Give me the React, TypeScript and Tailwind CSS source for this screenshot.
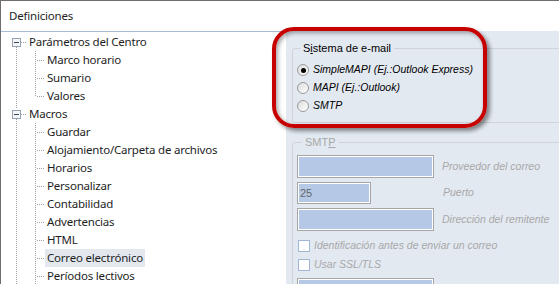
const tree: { label: string; root?: boolean; first?: boolean; last?: boolean; selected?: boolean }[] = [
  { label: "Parámetros del Centro", root: true, first: true },
  { label: "Marco horario" },
  { label: "Sumario" },
  { label: "Valores", last: true },
  { label: "Macros", root: true },
  { label: "Guardar" },
  { label: "Alojamiento/Carpeta de archivos" },
  { label: "Horarios" },
  { label: "Personalizar" },
  { label: "Contabilidad" },
  { label: "Advertencias" },
  { label: "HTML" },
  { label: "Correo electrónico", selected: true },
  { label: "Períodos lectivos" },
];

const dot = { stroke: "#a3a3a3", strokeDasharray: "1 1", shapeRendering: "crispEdges" as const };

function RootLines({ first }: { first?: boolean }) {
  return (
    <svg width="25" height="18" className="shrink-0">
      {!first && <line x1="15.5" y1="0" x2="15.5" y2="4" {...dot} />}
      <line x1="15.5" y1="14" x2="15.5" y2="18" {...dot} />
      <line x1="20" y1="9.5" x2="25" y2="9.5" {...dot} />
      <rect x="11.5" y="5.5" width="8" height="8" fill="#f4f6f8" stroke="#97a2b2" shapeRendering="crispEdges" />
      <line x1="13" y1="9.5" x2="18" y2="9.5" stroke="#3a4a66" shapeRendering="crispEdges" />
    </svg>
  );
}

function ChildLines({ last }: { last?: boolean }) {
  return (
    <svg width="44" height="18" className="shrink-0">
      <line x1="15.5" y1="0" x2="15.5" y2="18" {...dot} />
      <line x1="34.5" y1="0" x2="34.5" y2={last ? 10 : 18} {...dot} />
      <line x1="36" y1="9.5" x2="44" y2="9.5" {...dot} />
    </svg>
  );
}

function Radio({ checked, label }: { checked?: boolean; label: string }) {
  return (
    <div className="flex h-[18px] items-center">
      <div className="ml-[2px] flex h-[12px] w-[12px] items-center justify-center rounded-full border border-[#9a9a9a] bg-gradient-to-br from-[#dcdcdc] to-white">
        {checked && <div className="h-[5px] w-[5px] rounded-full bg-black" />}
      </div>
      <span className="ml-[4px] italic text-black">{label}</span>
    </div>
  );
}

function Field({ w, value }: { w: string; value?: string }) {
  return (
    <div className={`${w} h-full border border-[#a6a6a6] bg-[#b5c9e7] pl-[2px] text-[11px] text-[#666] shadow-[inset_0_0_0_1px_#fff] flex items-center`}>
      {value}
    </div>
  );
}

function Check({ label }: { label: string }) {
  return (
    <div className="flex h-[18px] items-center">
      <div className="ml-[1px] h-[12px] w-[12px] border border-[#a2b6d6] bg-white" />
      <span className="ml-[4px] italic">{label}</span>
    </div>
  );
}

export default function App() {
  return (
    <div className="relative h-[284px] w-[559px] overflow-hidden border-l border-t border-[#6e6e6e] bg-white font-['Noto_Sans',sans-serif] text-[11.5px] tracking-[-0.2px] text-[#1e1e1e]">
      {/* Title */}
      <div className="flex h-[30px] items-center pl-[8px]">Definiciones</div>

      <div className="flex">
        {/* Tree */}
        <div className="h-[260px] w-[285px] shrink-0 border-t border-[#a9bcd6] pt-[1px]">
          {tree.map((n) => (
            <div key={n.label} className="flex h-[18px] items-center leading-none">
              {n.root ? <RootLines first={n.first} /> : <ChildLines last={n.last} />}
              <span className={`flex h-[18px] items-center px-[2px] ${n.root ? "ml-[1px]" : ""} ${n.selected ? "bg-[#e3e8ef]" : ""}`}>
                {n.label}
              </span>
            </div>
          ))}
        </div>

        {/* Email settings */}
        <div className="h-[260px] flex-1 bg-[#e3e9f1] pl-[6px] pt-[10px] font-['Liberation_Sans',sans-serif] text-[10.5px] tracking-normal">
          <fieldset className="h-[82px] w-[300px] rounded-[3px] border border-[#d0d3d8] pl-[2px] pt-[6px]">
            <legend className="ml-[5px] px-[3px] text-[11px] leading-[14px] text-black">
              S<span className="underline">i</span>stema de e-mail
            </legend>
            <Radio checked label="SimpleMAPI (Ej.:Outlook Express)" />
            <Radio label="MAPI (Ej.:Outlook)" />
            <Radio label="SMTP" />
          </fieldset>

          <fieldset className="mt-[12px] h-[200px] w-[300px] rounded-[3px] border border-[#d0d3d8] pl-[4px] pt-[6px] text-[#a8a8a8]">
            <legend className="ml-[5px] px-[3px] text-[11px] leading-[14px]">
              SMT<span className="underline">P</span>
            </legend>
            <div className="grid grid-cols-[137px_auto] items-center gap-x-[8px]">
              <div className="h-[23px]"><Field w="w-[137px]" /></div>
              <span className="italic">Proveedor del correo</span>
              <div className="mt-[4px] h-[22px]"><Field w="w-[74px]" value="25" /></div>
              <span className="mt-[4px] pl-[1px] italic">Puerto</span>
              <div className="mt-[4px] h-[23px]"><Field w="w-[137px]" /></div>
              <span className="mt-[4px] italic">Dirección del remitente</span>
            </div>
            <div className="mt-[6px]">
              <Check label="Identificación antes de enviar un correo" />
            </div>
            <div className="mt-[1px]">
              <Check label="Usar SSL/TLS" />
            </div>
            <div className="mt-[4px] h-[23px]"><Field w="w-[137px]" /></div>
          </fieldset>
        </div>
      </div>

      {/* Red annotation outline */}
      <div className="absolute left-[271px] top-[26px] h-[101px] w-[215px] rounded-[22px] border-[4px] border-[#c70000] shadow-[3px_3px_4px_rgba(0,0,0,0.45),inset_2px_2px_4px_rgba(0,0,0,0.35)]" />
    </div>
  );
}
